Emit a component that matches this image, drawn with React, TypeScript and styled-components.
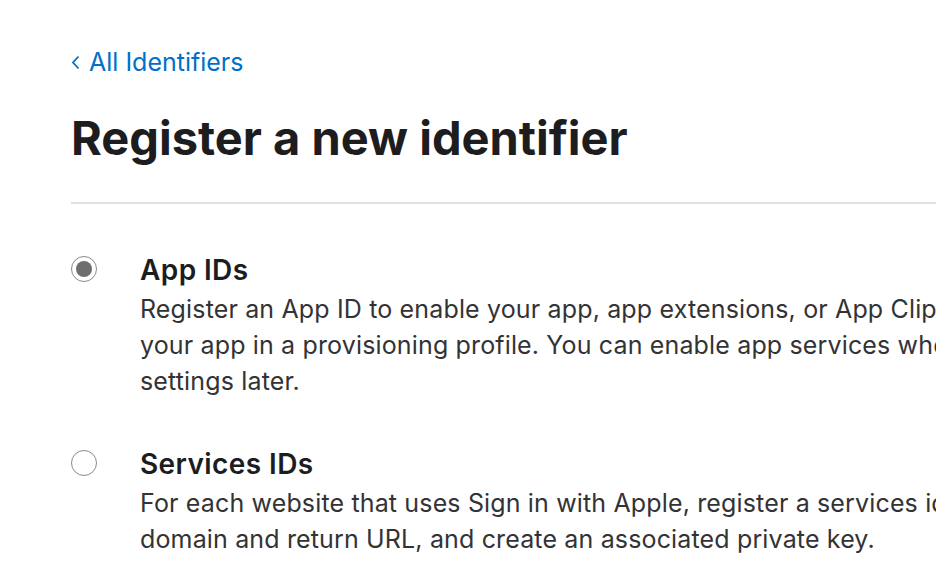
import React, { useState } from 'react';
import styled, { createGlobalStyle } from 'styled-components';

const GlobalStyle = createGlobalStyle`
  html, body {
    margin: 0;
    padding: 0;
    background: #ffffff;
    overflow: hidden;
  }
  body {
    font-family: Inter, "Noto Sans", "Liberation Sans", sans-serif;
    -webkit-font-smoothing: antialiased;
  }
`;

const Page = styled.div`
  width: 1400px;
  padding: 44px 0 0 71px;
  box-sizing: border-box;
`;

const BackLink = styled.a`
  display: flex;
  align-items: center;
  gap: 9px;
  height: 36px;
  color: #0070c9;
  font-size: 25px;
  font-weight: 400;
  text-decoration: none;
  cursor: pointer;
`;

const Title = styled.h1`
  margin: 30px 0 0;
  font-size: 47px;
  line-height: 56px;
  font-weight: 700;
  color: #1d1d1f;
`;

const Divider = styled.hr`
  margin: 36px 0 0;
  border: none;
  height: 2px;
  background: #e0e0e0;
`;

const Options = styled.div`
  display: flex;
  flex-direction: column;
  gap: 47px;
  padding-top: 48px;
`;

const Option = styled.label`
  display: grid;
  grid-template-columns: 69px 1fr;
  cursor: pointer;
`;

const Radio = styled.span<{ checked: boolean }>`
  width: 26px;
  height: 26px;
  margin-top: 4px;
  box-sizing: border-box;
  border-radius: 50%;
  border: 1.5px solid #8a8a8a;
  display: flex;
  align-items: center;
  justify-content: center;
  &::after {
    content: '';
    width: 16px;
    height: 16px;
    border-radius: 50%;
    background: #6e6e6e;
    display: ${(p) => (p.checked ? 'block' : 'none')};
  }
`;

const OptionBody = styled.div`
  display: flex;
  flex-direction: column;
`;

const OptionTitle = styled.div`
  margin-bottom: 3px;
  font-size: 28px;
  line-height: 36px;
  font-weight: 600;
  letter-spacing: 0.4px;
  color: #1d1d1f;
`;

const Line = styled.span`
  display: block;
  white-space: nowrap;
  font-size: 25px;
  line-height: 36px;
  letter-spacing: 0.15px;
  color: #333336;
`;

const options = [
  {
    id: 'app',
    title: 'App IDs',
    lines: [
      'Register an App ID to enable your app, app extensions, or App Clip to access available services and identify',
      'your app in a provisioning profile. You can enable app services when you create an App ID or modify these',
      'settings later.',
    ],
  },
  {
    id: 'services',
    title: 'Services IDs',
    lines: [
      'For each website that uses Sign in with Apple, register a services identifier (Services ID), configure your',
      'domain and return URL, and create an associated private key.',
    ],
  },
];

function App() {
  const [selected, setSelected] = useState('app');

  return (
    <>
      <GlobalStyle />
      <Page>
        <BackLink>
          <svg width="9" height="15" viewBox="0 0 9 15" fill="none">
            <path d="M7.5 1.5L2 7.5l5.5 6" stroke="#0070c9" strokeWidth="1.8" />
          </svg>
          All Identifiers
        </BackLink>
        <Title>Register a new identifier</Title>
        <Divider />
        <Options>
          {options.map((o) => (
            <Option key={o.id} onClick={() => setSelected(o.id)}>
              <Radio checked={selected === o.id} />
              <OptionBody>
                <OptionTitle>{o.title}</OptionTitle>
                {o.lines.map((l) => (
                  <Line key={l}>{l}</Line>
                ))}
              </OptionBody>
            </Option>
          ))}
        </Options>
      </Page>
    </>
  );
}

export default App;
